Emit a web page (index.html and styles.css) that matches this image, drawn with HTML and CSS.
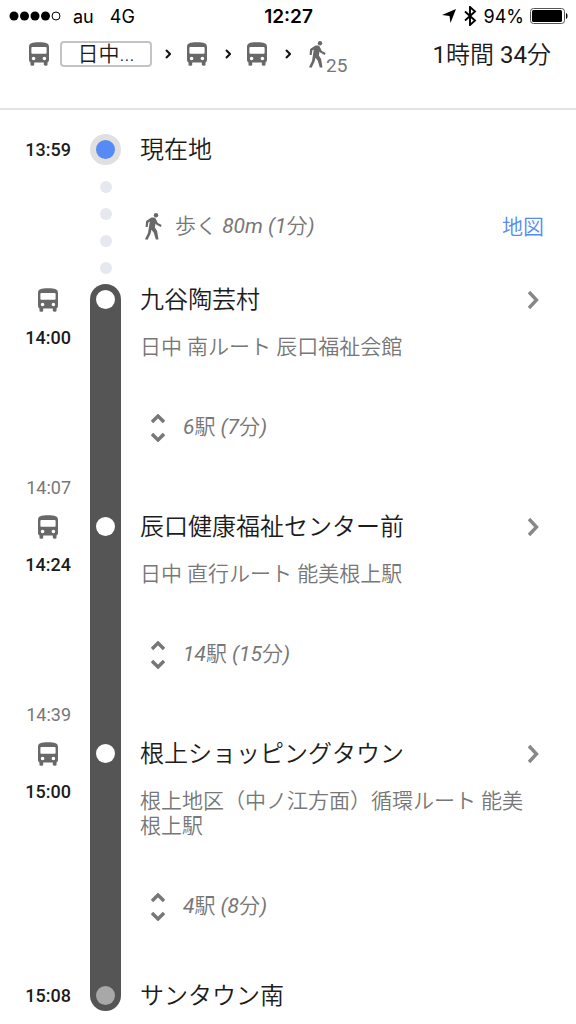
FILE: index.html
```html
<!DOCTYPE html>
<html lang="ja">
<head>
    <meta charset="UTF-8">
    <meta name="viewport" content="width=device-width, initial-scale=1.0">
    <title>経路の詳細</title>
    <link rel="stylesheet" href="styles.css">
</head>
<body>
    <!-- Shared icons -->
    <svg class="sprite" aria-hidden="true">
        <symbol id="bus" viewBox="0 0 20 24">
            <path fill-rule="evenodd" d="M0 5C0 1.200 3 .3 10 .3s10 .9 10 4.700v12.500c0 1.500-.6 2.500-1.500 3V22.500c0 .8-.4 1.200-1.200 1.200h-1.300c-.8 0-1.200-.4-1.200-1.200V20.500H5.200v2c0 .8-.4 1.200-1.200 1.200H2.700c-.8 0-1.200-.4-1.200-1.200v-2C.6 20 0 19 0 17.500zM3.300 5c-.6 0-.9.3-.9.9v4.900c0 .6.3.9.9.9h13.400c.6 0 .9-.3.900-.9V5.900c0-.6-.3-.9-.9-.9zM4.600 14.700a1.800 1.800 0 1 0 0 3.600 1.800 1.800 0 0 0 0-3.600zM15.400 14.700a1.800 1.800 0 1 0 0 3.600 1.800 1.800 0 0 0 0-3.600z"/>
        </symbol>
        <symbol id="walk" viewBox="0 0 17 27">
            <circle cx="11" cy="2.200" r="2.200"/>
            <path d="M6.500 4.600c1.700-.5 3.600-.1 4.400 1.300l1.900 4 3.900 2.200-1 1.900-4.500-2.400-.7-1-.6 3.800 2.200 3.500L13.500 26.500h-2.700L8.800 19.700l-2.300-3-1 4L2.600 26.700 0 26.200l3-6.200L4.800 8.600l-1.500.8-.6 4.500H.6l.5-6z"/>
        </symbol>
        <symbol id="next" viewBox="0 0 12 20">
            <path d="M2 2l7.500 8L2 18" fill="none" stroke="currentColor" stroke-width="3.400"/>
        </symbol>
        <symbol id="sep" viewBox="0 0 6 10">
            <path d="M1 1l4 4-4 4" fill="none" stroke="currentColor" stroke-width="2"/>
        </symbol>
        <symbol id="expand" viewBox="0 0 14 28">
            <path d="M1 8l6-6 6 6M1 20l6 6 6-6" fill="none" stroke="currentColor" stroke-width="3.400"/>
        </symbol>
    </svg>

    <div class="status-bar">
        <div class="carrier">
            <svg class="signal" viewBox="0 0 52 10">
                <circle cx="5" cy="5" r="4.500"/>
                <circle cx="15.500" cy="5" r="4.500"/>
                <circle cx="26" cy="5" r="4.500"/>
                <circle cx="36.500" cy="5" r="4.500"/>
                <circle cx="47" cy="5" r="4" fill="none" stroke="#000"/>
            </svg>
            <span>au</span>
            <span>4G</span>
        </div>
        <div class="clock">12:27</div>
        <div class="battery">
            <svg class="location" viewBox="0 0 14 14"><path d="M14 0L8.500 14 7.500 7 0 6z"/></svg>
            <svg class="bluetooth" viewBox="0 0 12 20"><path d="M1 5.500l10 9L6 19V1l5 4.500-10 9" fill="none" stroke="#000" stroke-width="1.900"/></svg>
            <span>94%</span>
            <svg class="level" viewBox="0 0 38 16">
                <rect x=".5" y=".5" width="34" height="15" rx="3" fill="none" stroke="#555"/>
                <rect x="2" y="2" width="30" height="12" rx="1.500"/>
                <path d="M36 5c2 .5 2 5.500 0 6z"/>
            </svg>
        </div>
    </div>

    <header class="summary">
        <div class="modes">
            <svg class="bus"><use href="#bus"/></svg>
            <span class="line-name">日中...</span>
            <svg class="sep"><use href="#sep"/></svg>
            <svg class="bus"><use href="#bus"/></svg>
            <svg class="sep"><use href="#sep"/></svg>
            <svg class="bus"><use href="#bus"/></svg>
            <svg class="sep"><use href="#sep"/></svg>
            <span class="walk-mode"><svg class="walk"><use href="#walk"/></svg><span class="minutes">25</span></span>
        </div>
        <div class="duration">1時間 34分</div>
    </header>

    <ol class="route">
        <li class="step walking">
            <div class="times">
                <time class="depart">13:59</time>
            </div>
            <div class="rail">
                <span class="here"></span>
                <span class="dot"></span>
                <span class="dot"></span>
                <span class="dot"></span>
                <span class="dot"></span>
            </div>
            <div class="info">
                <h2>現在地</h2>
                <div class="walk-row">
                    <svg class="walk"><use href="#walk"/></svg>
                    <em>歩く 80m (1分)</em>
                    <a href="#map">地図</a>
                </div>
            </div>
        </li>
        <li class="step ride first">
            <div class="times">
                <svg class="bus"><use href="#bus"/></svg>
                <time class="depart">14:00</time>
                <time class="arrive">14:07</time>
            </div>
            <div class="rail"><span class="stop"></span></div>
            <div class="info">
                <h2><a href="#stop1">九谷陶芸村 <svg class="next"><use href="#next"/></svg></a></h2>
                <p>日中 南ルート 辰口福祉会館</p>
                <button class="stops" type="button"><svg class="expand"><use href="#expand"/></svg><em>6駅 (7分)</em></button>
            </div>
        </li>
        <li class="step ride">
            <div class="times">
                <svg class="bus"><use href="#bus"/></svg>
                <time class="depart">14:24</time>
                <time class="arrive">14:39</time>
            </div>
            <div class="rail"><span class="stop"></span></div>
            <div class="info">
                <h2><a href="#stop2">辰口健康福祉センター前 <svg class="next"><use href="#next"/></svg></a></h2>
                <p>日中 直行ルート 能美根上駅</p>
                <button class="stops" type="button"><svg class="expand"><use href="#expand"/></svg><em>14駅 (15分)</em></button>
            </div>
        </li>
        <li class="step ride">
            <div class="times">
                <svg class="bus"><use href="#bus"/></svg>
                <time class="depart">15:00</time>
            </div>
            <div class="rail"><span class="stop"></span></div>
            <div class="info">
                <h2><a href="#stop3">根上ショッピングタウン <svg class="next"><use href="#next"/></svg></a></h2>
                <p>根上地区（中ノ江方面）循環ルート 能美根上駅</p>
                <button class="stops" type="button"><svg class="expand"><use href="#expand"/></svg><em>4駅 (8分)</em></button>
            </div>
        </li>
        <li class="step last">
            <div class="times">
                <time class="depart">15:08</time>
            </div>
            <div class="rail"><span class="stop end"></span></div>
            <div class="info">
                <h2>サンタウン南</h2>
            </div>
        </li>
    </ol>
</body>
</html>
```
FILE: styles.css
```css
/* General styles */
* {
    box-sizing: border-box;
}

body {
    margin: 0;
    background-color: #fff;
    color: #1c1c1c;
    font-family: Roboto, "Noto Sans CJK JP", sans-serif;
    font-weight: 350;
}

h2, p, ol {
    margin: 0;
    padding: 0;
    font-weight: inherit;
}

a {
    color: inherit;
    text-decoration: none;
}

svg {
    display: block;
    flex: none;
}

.sprite {
    display: none;
}

.bus {
    width: 20px;
    height: 24px;
    fill: #686868;
}

.walk {
    width: 17px;
    height: 27px;
    fill: #686868;
}

/* Status bar */
.status-bar {
    display: grid;
    grid-template-columns: 1fr auto 1fr;
    align-items: center;
    height: 32px;
    padding: 0 8px 0 9px;
    color: #000;
    font-family: Inter, sans-serif;
    font-size: 18px;
    font-weight: 400;
}

.carrier, .battery {
    display: flex;
    align-items: center;
}

.carrier {
    gap: 16px;
}

.carrier .signal {
    width: 52px;
    height: 10px;
    margin-right: -4px;
}

.clock {
    font-size: 19px;
    font-weight: 600;
}

.battery {
    justify-content: flex-end;
    gap: 6px;
}

.location {
    width: 14px;
    height: 14px;
}

.bluetooth {
    width: 16px;
    height: 20px;
}

.level {
    width: 38px;
    height: 16px;
}

/* Trip summary */
.summary {
    display: flex;
    justify-content: space-between;
    align-items: flex-start;
    height: 78px;
    padding: 8px 25px 0 29px;
    border-bottom: 2px solid #e2e2e2;
}

.modes {
    display: flex;
    align-items: center;
    height: 28px;
}

.line-name {
    width: 92px;
    height: 26px;
    margin: 0 13px 0 11px;
    border: 2px solid #c4c4c4;
    border-radius: 4px;
    font-size: 21px;
    line-height: 23px;
    text-align: center;
}

.sep {
    width: 6px;
    height: 10px;
    color: #111;
}

.sep + .bus {
    margin: 0 18px 0 16px;
}

.walk-mode {
    display: flex;
    margin-left: 18px;
}

.minutes {
    height: 15px;
    margin-top: 12px;
    color: #777;
    font-size: 19px;
    font-weight: 400;
    line-height: 25px;
}

.duration {
    font-family: Roboto, "Noto Sans CJK JP DemiLight", "Noto Sans CJK JP", sans-serif;
    font-size: 24px;
    font-weight: 400;
    line-height: 30px;
}

/* Route timeline */
.route {
    padding-top: 24px;
    list-style: none;
}

.step {
    display: grid;
    grid-template-columns: 71px 31px 1fr;
    column-gap: 19px;
    padding-right: 32px;
}

.walking {
    height: 150px;
}

.ride {
    min-height: 227px;
}

.times {
    display: flex;
    flex-direction: column;
    align-items: flex-end;
    font-size: 18px;
    line-height: 31px;
}

.times .bus {
    margin: 4px 13px 10px 0;
}

.depart {
    font-weight: 500;
}

.arrive {
    margin-top: auto;
    margin-bottom: 8px;
    color: #777;
    font-weight: 400;
}

.rail {
    display: flex;
    flex-direction: column;
    align-items: center;
}

.ride .rail, .last .rail {
    background-color: #555;
}

.first .rail {
    border-radius: 16px 16px 0 0;
}

.last .rail {
    height: 31px;
    border-radius: 0 0 16px 16px;
}

.stop {
    width: 19px;
    height: 19px;
    margin-top: 6px;
    border-radius: 50%;
    background-color: #fff;
}

.end {
    background-color: #a8a8a8;
}

.here {
    width: 31px;
    height: 31px;
    margin-bottom: 1px;
    border: 6px solid #e0e0e0;
    border-radius: 50%;
    background-color: #568af5;
}

.dot {
    width: 12px;
    height: 12px;
    margin-top: 15px;
    border-radius: 50%;
    background-color: #e6e8ef;
}

h2 {
    font-size: 24px;
    line-height: 33px;
}

h2 a {
    display: flex;
    justify-content: space-between;
    align-items: center;
}

.next {
    width: 12px;
    height: 20px;
    margin: 0 5px 2px 0;
    color: #888;
}

.info p {
    margin-top: 18px;
    color: #777;
    font-size: 21px;
    line-height: 25px;
}

.info em {
    color: #777;
    font-family: Roboto, "Noto Sans CJK JP DemiLight", "Noto Sans CJK JP", sans-serif;
    font-size: 21px;
    font-weight: 400;
    line-height: 31px;
    font-synthesis: none;
}

.walk-row {
    display: flex;
    align-items: center;
    gap: 13px;
    height: 31px;
    margin-top: 44px;
    padding-left: 5px;
}

.walk-row a {
    margin-left: auto;
    color: #568af5;
    font-size: 21px;
    line-height: 28px;
}

.stops {
    display: flex;
    align-items: center;
    gap: 18px;
    margin: 52px 0 58px;
    padding: 0 0 0 11px;
    border: none;
    background: none;
    font: inherit;
    cursor: pointer;
}

.first .stops, .first + .ride .stops {
    margin-bottom: 0;
}

.expand {
    width: 14px;
    height: 28px;
    color: #777;
}
```
